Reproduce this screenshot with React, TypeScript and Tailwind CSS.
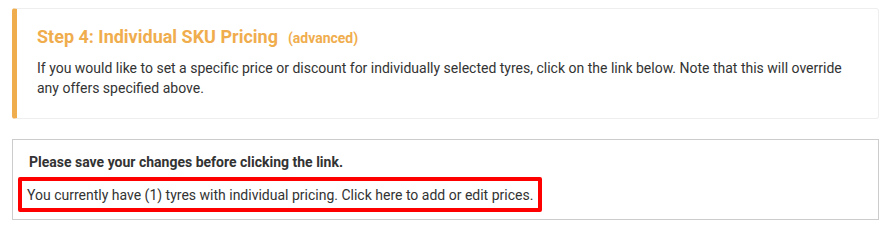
export default function App() {
  return (
    <div className="min-h-[228px] bg-white px-[12px] pt-[8px] pr-[13px] font-['Roboto','Liberation_Sans',sans-serif] text-[14px] text-[#333]">
      {/* step callout */}
      <div className="rounded-[3px] border border-l-[5px] border-[#eee] border-l-[#f0ad4e] pt-[18px] pb-[20px] pl-[20px] pr-[20px]">
        <h4 className="mb-[10px] leading-[20px] text-[18px] font-bold text-[#f0ad4e]">
          Step 4: Individual SKU Pricing
          <small className="ml-[10px] text-[14px] font-bold">(advanced)</small>
        </h4>
        <p className="leading-[20px]">
          If you would like to set a specific price or discount for individually selected tyres, click on the link
          below. Note that this will override any offers specified above.
        </p>
      </div>

      {/* link box */}
      <div className="mt-[20px] border border-[#ccc] pt-[12px] pb-[7px] pl-[5px]">
        <p className="ml-[11px] font-bold leading-[20px]">Please save your changes before clicking the link.</p>
        <div className="mt-[5px]">
          <a className="inline-block rounded-[2px] border-[4px] border-[#ff0000] px-[5px] pt-[4px] pb-[3px] leading-[20px] text-[#333]">
            You currently have (1) tyres with individual pricing. Click here to add or edit prices.
          </a>
        </div>
      </div>
    </div>
  );
}
